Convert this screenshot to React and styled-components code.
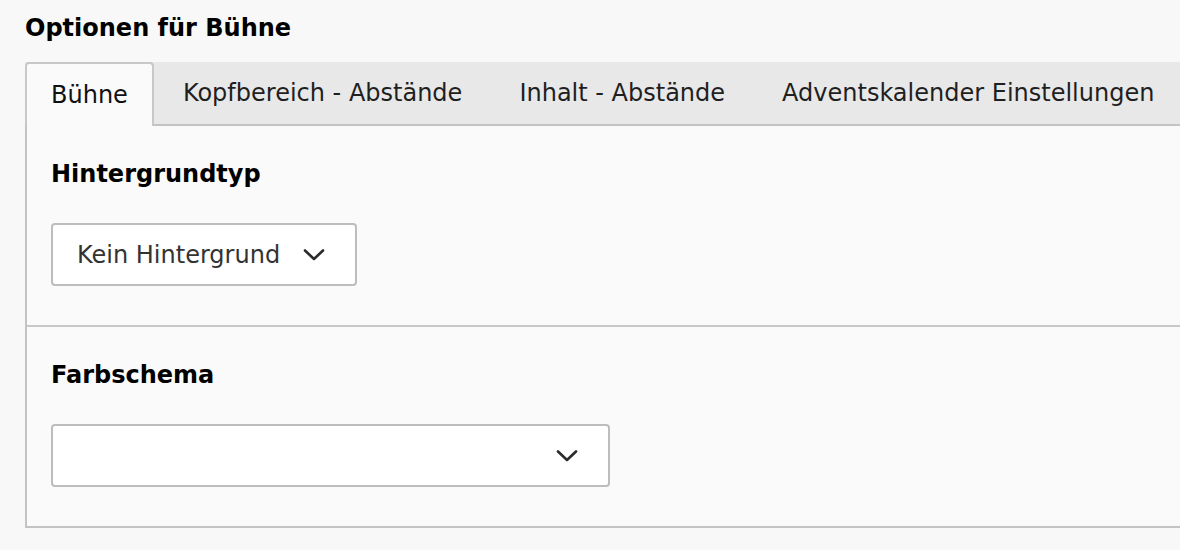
import styled, { createGlobalStyle } from "styled-components";

const GlobalStyle = createGlobalStyle`
  html, body {
    margin: 0;
    padding: 0;
    background: #f8f8f8;
    font-family: "DejaVu Sans", Verdana, sans-serif;
    color: #1a1a1a;
  }
`;

const tabs = [
  "Bühne",
  "Kopfbereich - Abstände",
  "Inhalt - Abstände",
  "Adventskalender Einstellungen",
];

const Chevron = () => (
  <svg width="22" height="12" viewBox="0 0 22 12" fill="none">
    <path
      d="M2 1.5 L11 10 L20 1.5"
      stroke="#2b2b2b"
      strokeWidth="2.6"
      strokeLinecap="round"
      strokeLinejoin="round"
    />
  </svg>
);

const App = () => {
  return (
    <Page>
      <GlobalStyle />
      <Title>Optionen für Bühne</Title>
      <TabBar>
        {tabs.map((t, i) => (
          <Tab key={t} $active={i === 0}>
            {t}
          </Tab>
        ))}
      </TabBar>
      <Panel>
        <Section>
          <Label>Hintergrundtyp</Label>
          <Select $width="306px">
            <span>Kein Hintergrund</span>
            <Chevron />
          </Select>
        </Section>
        <Section>
          <Label>Farbschema</Label>
          <Select $width="559px">
            <span></span>
            <Chevron />
          </Select>
        </Section>
      </Panel>
    </Page>
  );
};

export default App;

const Page = styled.div`
  padding: 10px 0 0 25px;
  width: 1180px;
  box-sizing: border-box;
  overflow: hidden;
  height: 550px;
`;

const Title = styled.h1`
  margin: 0;
  font-size: 24px;
  font-weight: bold;
  line-height: 36px;
  color: #000;
`;

const TabBar = styled.div`
  display: flex;
  margin-top: 16px;
  height: 62px;
  background: #e8e8e8;
  border-bottom: 2px solid #c3c3c3;
  width: 1300px;
`;

const Tab = styled.div`
  display: flex;
  align-items: center;
  padding: 0 28px 0 29px;
  font-size: 24px;
  color: #1f1f1f;
  white-space: nowrap;
  box-sizing: border-box;

  ${(p) =>
    p.$active &&
    `
    padding: 0 24px 0 24px;
    background: #fafafa;
    border: 2px solid #c8c8c8;
    border-bottom: none;
    border-radius: 4px 4px 0 0;
    margin-bottom: -2px;
    height: 64px;
    color: #111;
  `}
`;

const Panel = styled.div`
  background: #fafafa;
  border-left: 2px solid #c3c3c3;
  border-bottom: 2px solid #c3c3c3;
  width: 1300px;
`;

const Section = styled.div`
  padding: 30px 24px 39px;

  & + & {
    border-top: 2px solid #c8c8c8;
  }
`;

const Label = styled.div`
  font-size: 24px;
  font-weight: bold;
  line-height: 36px;
  color: #000;
  margin-bottom: 31px;
`;

const Select = styled.div`
  display: flex;
  align-items: center;
  justify-content: space-between;
  box-sizing: border-box;
  width: ${(p) => p.$width};
  height: 63px;
  padding: 0 30px 0 24px;
  background: #fff;
  border: 2px solid #bdbdbd;
  border-radius: 4px;
  font-size: 24px;
  color: #333;
`;
